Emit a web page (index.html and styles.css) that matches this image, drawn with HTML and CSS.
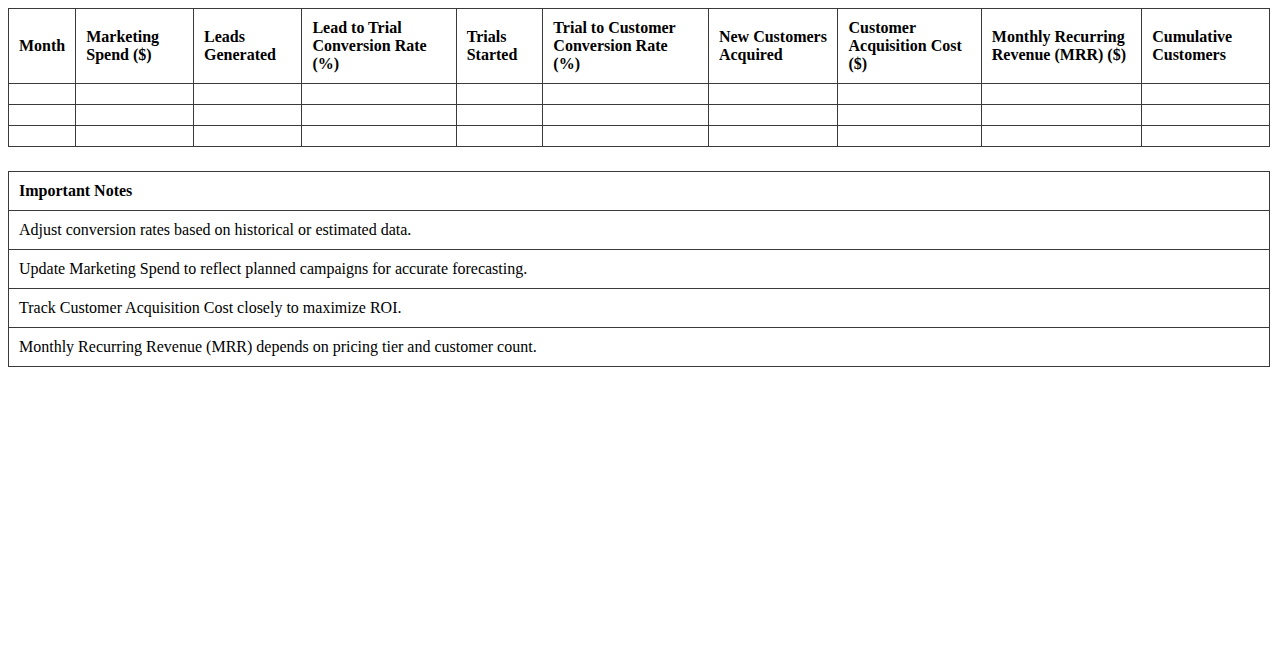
FILE: index.html
```html
<!DOCTYPE html>
<html>
<head>
<meta charset="utf-8">
<link rel="stylesheet" href="styles.css">
</head>
<body>
<table class="grid">
  <thead>
    <tr>
      <th>Month</th>
      <th>Marketing Spend ($)</th>
      <th>Leads Generated</th>
      <th>Lead to Trial Conversion Rate (%)</th>
      <th>Trials Started</th>
      <th>Trial to Customer Conversion Rate (%)</th>
      <th>New Customers Acquired</th>
      <th>Customer Acquisition Cost ($)</th>
      <th>Monthly Recurring Revenue (MRR) ($)</th>
      <th>Cumulative Customers</th>
    </tr>
  </thead>
  <tbody>
    <tr><td></td><td></td><td></td><td></td><td></td><td></td><td></td><td></td><td></td><td></td></tr>
    <tr><td></td><td></td><td></td><td></td><td></td><td></td><td></td><td></td><td></td><td></td></tr>
    <tr><td></td><td></td><td></td><td></td><td></td><td></td><td></td><td></td><td></td><td></td></tr>
  </tbody>
</table>
<table class="grid notes">
  <thead>
    <tr><th>Important Notes</th></tr>
  </thead>
  <tbody>
    <tr><td>Adjust conversion rates based on historical or estimated data.</td></tr>
    <tr><td>Update Marketing Spend to reflect planned campaigns for accurate forecasting.</td></tr>
    <tr><td>Track Customer Acquisition Cost closely to maximize ROI.</td></tr>
    <tr><td>Monthly Recurring Revenue (MRR) depends on pricing tier and customer count.</td></tr>
  </tbody>
</table>
</body>
</html>
```
FILE: styles.css
```css
body {
  margin: 8px;
  font-family: "Liberation Serif", "Times New Roman", serif;
  font-size: 16px;
  color: #000;
  background: #fff;
}
.grid {
  width: 100%;
  border-collapse: collapse;
}
.grid th,
.grid td {
  border: 1px solid #3a3a3a;
  padding: 10px;
  text-align: left;
  vertical-align: middle;
}
.grid th {
  font-weight: bold;
}
.notes {
  margin-top: 24px;
}
```
